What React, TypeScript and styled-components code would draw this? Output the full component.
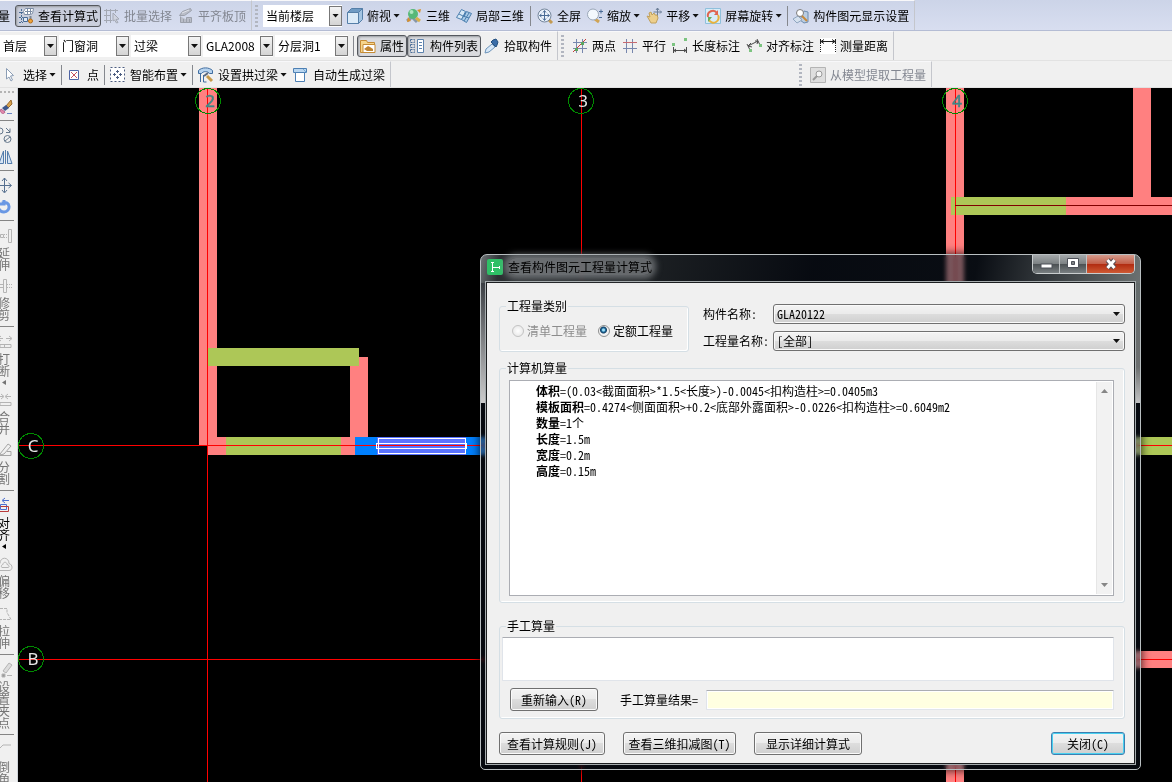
import React, { useState } from 'react';
import styled, { createGlobalStyle, css } from 'styled-components';

const GlobalStyle = createGlobalStyle`
  * { box-sizing: border-box; }
  body {
    margin: 0;
    background: #000;
    color: #000;
    font: 12px/16px "Noto Sans CJK SC", sans-serif;
  }
  button, select, input, textarea { font: inherit; color: inherit; }
`;

/* ---------- icons ---------- */

const Svg = styled.svg`
  display: block;
  flex: none;
  width: 16px;
  height: 16px;
  overflow: visible;
`;

const blue = '#4a6c96';
const grey = '#b4b4b4';

const icons: Record<string, React.ReactNode> = {
  formula: (
    <g fill="none" stroke={blue}>
      <path d="M3.500 1v13M1 4.500h4M1 9.500h4M1 14.500h4" strokeDasharray="2 1" />
      <path d="M5.500 3.500l2-3h8l-1 5-2 1h-6z" fill="#fff" stroke="#7d8da5" />
      <path d="M7 3.500h7M9.500 1v5M12.500 1v5" stroke="#7d8da5" />
      <path d="M5.500 9.500h4v4h-4z" fill="#dfe8f5" />
      <path d="M12.500 8v5" stroke="#7b8694" strokeWidth="2" />
      <circle cx="12.500" cy="13" r="2" fill="#f0a63c" stroke="#b56b17" />
    </g>
  ),
  batch: (
    <g fill="none" stroke="#a3a8b3">
      <path d="M0 2.500h14M0 7.500h7M0 12.500h8M2.500 1v14M6.500 1v14M11.500 1v4" />
      <path d="M9 5l6 6-3 .5 2 3-1.500.5-2-3L9 13z" fill="#cfd3de" />
    </g>
  ),
  slab: (
    <g fill="#b9bdc8" stroke="#9ba0ab">
      <path d="M1.500 7.500l3-4 8-3 1 2-7 5z" />
      <path d="M4 5l7-3" fill="none" stroke="#e0e3ea" />
      <path d="M2.500 8.500v6h11v-5h-5v2" />
      <path d="M5.500 11v3M8.500 11v3M11.500 11v3" />
    </g>
  ),
  cube: (
    <g stroke="#557fa8">
      <path d="M.5 4.500l4-4h11l-4 4z" fill="#6f9bc4" />
      <path d="M.5 4.500h11v11H.5z" fill="#dcebf8" />
      <path d="M11.500 4.500l4-4v11l-4 4z" fill="#a3c4e2" />
    </g>
  ),
  orbit: (
    <g>
      <path d="M1 13l5-4 5 5" stroke="#8596a8" strokeWidth="3" fill="none" />
      <circle cx="7" cy="6" r="5" fill="#57b878" />
      <circle cx="5.500" cy="4" r="2" fill="#aee6bf" />
      <path d="M11 2l4-1-1 4zM2 9l-1 5 4-1z" fill="#d9902a" />
      <path d="M10 10l4 3" stroke="#d9b04a" strokeWidth="3" />
    </g>
  ),
  partial: (
    <g fill="#d7e8f6" stroke="#4b7fae">
      <path d="M.5 9.500l5-8 4 2-4 8z" />
      <path d="M5.500 11.500l5-8 5 2-5 9z" fill="#a9cbe8" />
      <path d="M3 6l4 2 6 2M8 9l2-5M8 13l5-8" fill="none" />
    </g>
  ),
  fullscreen: (
    <g fill="none" stroke={blue}>
      <path d="M12 12l3 3" stroke="#c39a52" strokeWidth="3" />
      <circle cx="7.500" cy="7.500" r="6.500" fill="#e9f1fb" stroke="#75869b" />
      <path d="M7.500 3v9M3 7.500h9M6 4.500l1.500-2L9 4.500M6 10.500l1.500 2 1.500-2M4.500 6l-2 1.500 2 1.500M10.500 6l2 1.500-2 1.500" />
    </g>
  ),
  zoom: (
    <g fill="none">
      <path d="M8 11l4 3" stroke="#d0a454" strokeWidth="3" />
      <circle cx="6" cy="6.500" r="5.500" fill="#f3f8fd" stroke="#9aa7b8" />
      <path d="M12 3.500h4M14 1.500v4M12 9.500h3" stroke={blue} />
    </g>
  ),
  hand: (
    <g>
      <path d="M11.500 0v8M7.500 4h8M10 2l1.500-2L13 2M14 2.500L15.500 4 14 5.500" stroke="#6c7f98" fill="none" />
      <path d="M1 8l3 1-1-4 2-1 1 3 2-2 1 2h2l1 3-2 5H5z" fill="#edcf8c" stroke="#c0a05c" />
    </g>
  ),
  rotateView: (
    <g fill="none">
      <path d="M.5.5h15v15H.5z" fill="#d7ecf8" stroke="#8fc0dc" />
      <path d="M3 9a5 5 0 0 1 9-4" stroke="#e06550" strokeWidth="2" />
      <path d="M13 7a5 5 0 0 1-9 5" stroke="#e8b23c" strokeWidth="2" />
      <path d="M13 2v5H9z" fill="#e06550" />
      <path d="M3 14v-5h4z" fill="#69ad58" />
    </g>
  ),
  display: (
    <g>
      <path d="M7 12l4-9 4 1v10l-4 1z" fill="#b9cde2" stroke="#6d8bad" />
      <path d="M0 11l5-3 4 4-5 3z" fill="#d5e1ee" stroke="#8fa5bf" />
      <circle cx="7" cy="5" r="3.500" fill="#fff" stroke="#7c7c7c" />
      <path d="M9 8l5 5" stroke="#c8893b" strokeWidth="2" />
    </g>
  ),
  props: (
    <g>
      <path d="M.5 2.500h6l1 2h7v10H.5z" fill="#f6d58c" stroke="#c58b34" />
      <path d="M3 6.500h12v8H3z" fill="#fff" stroke="#c58b34" />
      <path d="M4 11l4-3 2 1 3 2v2H7z" fill="#c18531" />
    </g>
  ),
  list: (
    <g fill="none">
      <path d="M.5 1.500h4v3h-4zM.5 6.500h4v3h-4zM.5 11.500h4v3h-4z" stroke={blue} strokeDasharray="2 1" />
      <path d="M7.500 1.500h6v13h-6z" fill="#fff" stroke="#5d82ad" />
      <path d="M9 4.500h3M9 7.500h3M9 10.500h3" stroke="#5d82ad" />
    </g>
  ),
  picker: (
    <g>
      <path d="M8 6l3 3-6 5-4 1 1-4z" fill="#d7e8f8" stroke="#6d94ba" />
      <path d="M7 4l5 5 1-2 1-3-2-3-3 1z" fill="#3a6da8" stroke="#24507f" />
    </g>
  ),
  twoPoint: (
    <g fill="none">
      <path d="M4.500 1v14M10.500 1v14M1 4.500h14M1 10.500h14" stroke="#7787ad" />
      <path d="M1 14L14 1" stroke="#c63d3d" />
      <path d="M3 10h3v3H3zM9 4h3v3H9z" fill="#5aa75f" />
    </g>
  ),
  parallel: (
    <g fill="none">
      <path d="M4.500 1v14M10.500 1v14" stroke="#7787ad" />
      <path d="M1 10.500h14" stroke="#7787ad" />
      <path d="M1 4.500h14" stroke="#c66a70" />
    </g>
  ),
  lengthDim: (
    <g fill="none" stroke="#4b4b4b">
      <path d="M1.500 9v6M14.500 9v6M2 12.500h12M4 11l-2 1.500L4 14M12 11l2 1.500-2 1.500" />
      <path d="M0 5h3v3H0zM12 0h3v3h-3z" fill="#7cc480" stroke="none" />
    </g>
  ),
  alignDim: (
    <g fill="none" stroke="#4b4b4b">
      <path d="M1 6l3 6M11 1l3 6M2 8l10-5M5 5L2 8l4 1M9 3h3l-1 3" />
      <path d="M3 11h3v3H3zM13 6h3v3h-3z" fill="#7cc480" stroke="none" />
    </g>
  ),
  measure: (
    <g fill="none" stroke="#222">
      <path d="M0 0h16v16H0z" fill="#fff" stroke="none" />
      <path d="M.5 1v5M15.500 1v5M1 3.500h14M4 1.500l-3 2 3 2M12 1.500l3 2-3 2" />
      <path d="M.5 7v8M15.500 7v8" strokeDasharray="1 1" />
    </g>
  ),
  cursor: <path d="M3.500 1.500l7 7-3 .5 2 4-1.500 1-2-4-2.500 2z" fill="#fff" stroke="#8b9db5" />,
  point: (
    <g fill="none">
      <path d="M2.500 3.500h9v9h-9z" fill="#fff" stroke="#4e64a5" />
      <path d="M4 5l6 6M10 5l-6 6" stroke="#c55260" />
    </g>
  ),
  smart: (
    <g fill="none" stroke="#4c5d80">
      <path d="M.5.5h14v14H.5z" fill="#fff" strokeDasharray="2 2" />
      <path d="M7.500 3v3M7.500 9v3M3 7.500h3M9 7.500h3M6 4.500h3M6 10.500h3M4.500 6v3M10.500 6v3" />
    </g>
  ),
  arch: (
    <g fill="none">
      <path d="M.5 6.500v-3C4 0 11 0 14.500 3.500v3h-3C10 4 5 4 3.500 6.500z" fill="#b6d3ef" stroke="#3e6ca0" />
      <path d="M2.500 7v8M5.500 8v7h3" stroke="#3e6ca0" />
      <path d="M9 9l5 5" stroke="#c79a4a" strokeWidth="3" />
      <path d="M6 9l4-3" stroke="#5a6980" strokeWidth="2" />
    </g>
  ),
  lintel: (
    <g fill="#fff" stroke="#4d80b4">
      <path d="M.5 1.500h13v4H.5z" fill="#b9d6f0" />
      <path d="M2.500 5.500h9v9h-9z" />
      <path d="M10 2l4 4" stroke="#74a8d4" />
    </g>
  ),
  extract: (
    <g fill="none" stroke={grey}>
      <path d="M.5.5h15v15H.5z" fill="#dedede" />
      <circle cx="9" cy="7" r="3" fill="#f5f5f5" stroke="#999" />
      <path d="M7 9l-4 4" stroke="#999" strokeWidth="2" />
    </g>
  ),
  brush: (
    <g>
      <path d="M10 7l5-6 1 4-4 4z" fill="#d9a24c" stroke="#97672b" />
      <path d="M6 9l4-3 3 3-4 3z" fill="#3c568b" />
      <path d="M5 10l4 3c-1 3-6 1-4-3z" fill="#e58bb0" stroke="#b8648a" />
      <path d="M11 14.500h5" stroke="#6a86c4" />
    </g>
  ),
  copy: (
    <g fill="none" stroke="#66788c">
      <path d="M10 1l4 4M14 1.500v4h-4" />
      <circle cx="4" cy="4" r="3" />
      <circle cx="11.500" cy="12" r="3.500" />
      <path d="M9 14l5-4" />
    </g>
  ),
  mirror: (
    <g fill="#d7e5f5" stroke="#547dac">
      <path d="M7.500 2v12.500H3zM11.500 2v12.500h4.500z" />
      <path d="M9.500 1v14" />
    </g>
  ),
  move: (
    <path d="M8.500 1v14M2 8.500h13M6 4l2.500-3L11 4M6 13l2.500 3 2.500-3M12.500 6l3 2.500-3 2.500" fill="none" stroke="#567090" />
  ),
  rotate: <path d="M4 5h4v-4M6 4c9-3 9 9 2 9-3 0-4-1-5-3" fill="none" stroke="#6a98e4" strokeWidth="3" />,
  extend: (
    <g fill="none" stroke={grey}>
      <path d="M12.500 1.500h3v13h-3z" />
      <path d="M4.500 6.500h3v3h-3z" />
      <path d="M8 6.500h4M8 9.500h4" strokeDasharray="1 1" />
    </g>
  ),
  trim: (
    <g fill="none" stroke={grey}>
      <path d="M7.500 1.500h3v13h-3zM2 6.500h5M2 9.500h5" />
      <path d="M11 6.500h5M11 9.500h5" strokeDasharray="1 1" />
    </g>
  ),
  breakIcon: (
    <path d="M4 10.500h11v3H4zM8.500 10v3M2 4.500h5M10 4.500h5M13 2l3 2.500-3 2.500M5 2L2 4.500 5 7" fill="none" stroke={grey} />
  ),
  merge: (
    <path d="M4 10.500h11v3H4zM2 4.500h5M10 4.500h5M12 2l-3 2.500 3 2.500M5 2l3 2.500L5 7" fill="none" stroke={grey} />
  ),
  split: <path d="M3 13.500h12v-4h-4M4 12l8-10 3 2-7 8-4 1z" fill="none" stroke="#a5a5a5" />,
  align: (
    <g fill="none">
      <path d="M7 2.500h6M9 0L6 2.500 9 5" stroke="#4a6ed0" />
      <path d="M4.500 6.500h6v5h-6z" stroke="#4a6ed0" />
      <path d="M4 13.500h8.500v-5h-8" stroke="#b83a3a" />
    </g>
  ),
  offset: (
    <g fill="none" stroke={grey}>
      <path d="M4 14.500h9c4 0 4-6 0-7 0-7-9-7-9 0-3 2-2 6 0 7z" />
      <path d="M6 11.500h6c2 0 1-3-1-3 0-3-4-3-4 0-2 0-2 3-1 3z" />
    </g>
  ),
  stretch: (
    <path d="M4 2.500h7v4l4 7H4" fill="none" stroke={grey} strokeDasharray="3 1" />
  ),
  grip: (
    <g fill="#dcdcdc" stroke={grey}>
      <path d="M7 9l6-8 3 2-6 8z" />
      <path d="M6 12h3v3H6z" fill="#999" />
      <path d="M11 13.500h5" />
    </g>
  ),
  chamfer: <path d="M3 7l4-4h8" fill="none" stroke={grey} />,
};

const Icon = ({ name }: { name: string }) => (
  <Svg viewBox="0 0 16 16" aria-hidden="true">{icons[name]}</Svg>
);

/* ---------- toolbars ---------- */

const Page = styled.div`
  position: relative;
  display: flex;
  flex-direction: column;
  min-height: 100vh;
  overflow: hidden;
`;

const ToolRow = styled.div<{ $tinted?: boolean; $height: number }>`
  display: flex;
  height: ${p => p.$height}px;
  background: ${p => (p.$tinted ? 'linear-gradient(#ccd4e8, #d8def0)' : '#f0f0f0')};
  border-bottom: 1px solid ${p => (p.$tinted ? '#b4bcd4' : '#e2e2e2')};
`;

const ToolPanel = styled.div<{ $push?: number }>`
  display: flex;
  align-items: center;
  flex: none;
  padding-right: 2px;
  margin-left: ${p => p.$push ?? 0}px;
  border-right: 1px solid #c4c6cc;
  border-top: 1px solid #f8f8fa;
`;

const ToolButton = styled.button<{ $pressed?: boolean }>`
  display: flex;
  align-items: center;
  flex: none;
  height: 22px;
  padding: 0 3px;
  border: 0;
  background: none;
  white-space: nowrap;
  &:disabled { color: #838791; }
  ${p => p.$pressed && css`
    padding: 0 2px;
    border: 1px solid #55585e;
    border-radius: 3px;
    background: rgba(190, 194, 202, 0.45);
    box-shadow: inset 1px 1px 2px #9a9ca0;
  `}
`;

const ToolText = styled.span`
  margin: 0 2px 0 4px;
  &:last-child { margin-right: 0; }
`;

const Arrow = styled.span`
  width: 7px;
  height: 4px;
  background: #111;
  clip-path: polygon(0 0, 100% 0, 50% 100%);
`;

const Divider = styled.span<{ $tight?: boolean }>`
  flex: none;
  width: 1px;
  height: 20px;
  margin: 0 ${p => (p.$tight ? 2 : 3)}px;
  background: #85888e;
`;

const Handle = styled.span`
  flex: none;
  width: 3px;
  height: 22px;
  margin: 0 5px 0 3px;
  background: repeating-linear-gradient(#b2b6c0 0 2px, transparent 2px 4px);
`;

const ComboBox = styled.label<{ $width: number }>`
  display: grid;
  flex: none;
  width: ${p => p.$width}px;
  height: 22px;
  margin-right: 2px;
  background: #fff;
  & > * { grid-area: 1 / 1; }
`;

const ComboSelect = styled.select`
  appearance: none;
  min-width: 0;
  width: 100%;
  padding: 0 14px 0 3px;
  border: 0;
  background: none;
`;

const ComboArrow = styled.span`
  display: grid;
  place-items: center;
  justify-self: end;
  width: 13px;
  height: 20px;
  align-self: center;
  border: 1px solid #777;
  background: linear-gradient(#f4f4f4, #d4d4d4);
  pointer-events: none;
`;

const Clipped = styled.span`
  flex: none;
  width: 12px;
  margin: 0 5px 0 -2px;
`;

function Combo({ value, width, label }: { value: string; width: number; label: string }) {
  return (
    <ComboBox $width={width}>
      <ComboSelect aria-label={label}><option>{value}</option></ComboSelect>
      <ComboArrow><Arrow /></ComboArrow>
    </ComboBox>
  );
}

type ToolProps = { icon: string; text: string; menu?: boolean; pressed?: boolean; disabled?: boolean };

const Tool = ({ icon, text, menu, pressed, disabled }: ToolProps) => (
  <ToolButton type="button" $pressed={pressed} aria-pressed={pressed} disabled={disabled}>
    <Icon name={icon} />
    <ToolText>{text}</ToolText>
    {menu && <Arrow />}
  </ToolButton>
);

/* ---------- side bar ---------- */

const Workspace = styled.div`
  display: flex;
  flex: 1;
  min-height: 694px;
`;

const SideBar = styled.nav`
  display: flex;
  flex-direction: column;
  align-items: flex-start;
  flex: none;
  width: 18px;
  height: 694px;
  min-height: 100%;
  overflow: hidden;
  background: #f0f0f0;
  border-right: 1px solid #cfd4da;
`;

const SideHandle = styled.span`
  flex: none;
  width: 16px;
  height: 2px;
  margin: 3px 0 6px;
  background: repeating-linear-gradient(90deg, #b4b4b4 0 2px, transparent 2px 4px);
`;

const SideTool = styled.button<{ $labelled: boolean }>`
  display: flex;
  flex-direction: column;
  align-items: center;
  flex: none;
  gap: 3px;
  width: 16px;
  margin-left: -4px;
  padding: ${p => (p.$labelled ? 1 : 0)}px 0 0;
  border: 0;
  background: none;
  &:disabled { color: #747474; }
  & + & { margin-top: 6px; }
`;

const SideLabel = styled.span`
  width: 12px;
  line-height: 12px;
  word-break: break-all;
`;

const SideArrow = styled.span`
  width: 4px;
  height: 5px;
  background: currentColor;
  clip-path: polygon(100% 0, 100% 100%, 0 50%);
`;

const SideDivider = styled.hr`
  flex: none;
  width: 14px;
  height: 1px;
  margin: 5px 0 6px;
  border: 0;
  background: #858585;
`;

type SideEntry = { icon: string; text?: string; label: string; menu?: boolean; active?: boolean };

const sideGroups: SideEntry[][] = [
  [{ icon: 'brush', label: '删除' }],
  [{ icon: 'copy', label: '复制' }, { icon: 'mirror', label: '镜像' }],
  [{ icon: 'move', label: '移动' }, { icon: 'rotate', label: '旋转' }],
  [{ icon: 'extend', text: '延伸', label: '延伸' }, { icon: 'trim', text: '修剪', label: '修剪' }],
  [
    { icon: 'breakIcon', text: '打断', label: '打断', menu: true },
    { icon: 'merge', text: '合并', label: '合并' },
    { icon: 'split', text: '分割', label: '分割' },
  ],
  [
    { icon: 'align', text: '对齐', label: '对齐', menu: true, active: true },
    { icon: 'offset', text: '偏移', label: '偏移' },
    { icon: 'stretch', text: '拉伸', label: '拉伸' },
  ],
  [{ icon: 'grip', text: '设置夹点', label: '设置夹点' }],
  [{ icon: 'chamfer', text: '倒角', label: '倒角' }],
];

/* ---------- drawing ---------- */

const Plan = styled.svg`
  display: block;
  flex: 1;
  min-width: 0;
  align-self: stretch;
  background: #000;
  font: 17px "Noto Sans", sans-serif;
`;

const wall = '#ff8080';
const beam = '#adc757';

type AxisProps = { x: number; y: number; name: string; teal?: boolean };

const AxisMark = ({ x, y, name, teal }: AxisProps) => (
  <g>
    <circle cx={x} cy={y} r="12.500" fill="none" stroke="#008a00" />
    <text x={x + 2} y={y + 6} textAnchor="middle" fill={teal ? '#3f8686' : '#e4e4e4'} stroke={teal ? '#3f8686' : 'none'} strokeWidth="0.500">{name}</text>
  </g>
);

const FloorPlan = () => (
  <Plan role="img" aria-label="平面图" shapeRendering="crispEdges">
    <g fill={wall}>
      <rect x="181" y="0" width="18" height="358" />
      <rect x="190" y="349" width="147" height="18" />
      <rect x="332" y="269" width="18" height="80" />
      <rect x="928" y="0" width="18" height="100%" />
      <rect x="1115" y="0" width="18" height="110" />
      <rect x="1047" y="109" width="100%" height="18" />
      <rect x="1090" y="563" width="100%" height="17" />
    </g>
    <g fill={beam}>
      <rect x="190" y="260" width="151" height="18" />
      <rect x="208" y="349" width="115" height="18" />
      <rect x="933" y="109" width="115" height="18" />
      <rect x="1090" y="349" width="100%" height="18" />
    </g>
    <rect x="337" y="349" width="160" height="18" fill="#0080ff" />
    <rect x="359" y="349" width="89" height="18" fill="#5a73ff" />
    <g stroke="#f00">
      <line x1="189.500" y1="0" x2="189.500" y2="100%" />
      <line x1="563.500" y1="0" x2="563.500" y2="100%" />
      <line x1="937.500" y1="0" x2="937.500" y2="100%" />
      <line x1="0" y1="357.500" x2="100%" y2="357.500" />
      <line x1="0" y1="571.500" x2="100%" y2="571.500" />
    </g>
    <line x1="937" y1="117.500" x2="100%" y2="117.500" stroke="#800000" />
    <g fill="none" stroke="#fff">
      <rect x="360.500" y="350.500" width="87" height="15" />
      <rect x="358.500" y="355.500" width="90" height="5" />
    </g>
    <AxisMark x={190} y={13} name="2" teal />
    <AxisMark x={563} y={13} name="3" />
    <AxisMark x={937} y={13} name="4" teal />
    <AxisMark x={13} y={358} name="C" />
    <AxisMark x={13} y={571} name="B" />
  </Plan>
);

/* ---------- dialog ---------- */

const Dialog = styled.section`
  position: absolute;
  top: 254px;
  left: 480px;
  right: 31px;
  padding: 0 5px 5px;
  border: 1px solid #b9bfc1;
  border-radius: 7px 7px 5px 5px;
  background:
    linear-gradient(rgba(110, 114, 118, 0.5), rgba(225, 225, 225, 0.9)) left 28px / 5px 120px no-repeat,
    linear-gradient(rgba(110, 118, 118, 0.9), rgba(120, 122, 122, 0.9) 70%, rgba(215, 215, 215, 0.9)) right 28px / 5px 120px no-repeat,
    linear-gradient(100deg, rgba(120, 126, 128, 0.9) 0, rgba(60, 64, 66, 0.7) 20px, rgba(38, 42, 44, 0.7) 160px, rgba(8, 12, 20, 0.2) 330px, rgba(20, 26, 32, 0.2) 490px, rgba(80, 86, 88, 0.7) 570px, rgba(112, 118, 118, 0.95) 100%) top / 100% 28px no-repeat,
    rgba(20, 30, 46, 0.35);
  backdrop-filter: blur(2px) saturate(0.6);
  box-shadow: 0 0 8px 1px rgba(0, 0, 0, 0.7);
  font-family: "Noto Sans Mono CJK SC", "Noto Sans CJK SC", monospace;
`;

const TitleBar = styled.header`
  display: flex;
  align-items: flex-start;
  height: 27px;
  padding-left: 1px;
`;

const Title = styled.h1`
  flex: 1;
  margin: 4px 0 0 5px;
  font: 12px/16px "Noto Sans CJK SC", sans-serif;
  & > span {
    border-radius: 8px;
    background: rgba(150, 154, 156, 0.6);
    box-shadow: 0 0 6px 4px rgba(150, 154, 156, 0.6);
  }
`;

const AppIcon = styled(Svg)`
  margin-top: 4px;
`;

const WindowButtons = styled.div`
  display: flex;
  overflow: hidden;
  border: 1px solid #c9cdce;
  border-top: 0;
  border-radius: 0 0 5px 5px;
`;

const WindowButton = styled.button<{ $close?: boolean }>`
  display: grid;
  place-items: center;
  width: ${p => (p.$close ? 47 : 27)}px;
  height: 18px;
  padding: 0;
  border: 0;
  border-right: ${p => (p.$close ? 0 : 1)}px solid #c0c4c6;
  background: ${p => (p.$close
    ? 'linear-gradient(#d49a8c, #c4604a 48%, #b02a10 50%, #cf5a34)'
    : 'linear-gradient(#a4a8aa, #7d8284 48%, #4a4f52 50%, #7a8082)')};
`;

const DialogBody = styled.form`
  padding: 17px 9px 8px 12px;
  border: 1px solid #1c1e20;
  outline: 1px solid #a6acae;
  background: #f0f0f0;
`;

const TopRow = styled.div`
  display: flex;
  align-items: flex-start;
  gap: 14px;
`;

const Group = styled.fieldset<{ $pad: string; $width?: number }>`
  min-width: 0;
  width: ${p => (p.$width ? `${p.$width}px` : 'auto')};
  flex: none;
  margin: 0;
  padding: ${p => p.$pad};
  border: 1px solid #d5dfe5;
  border-radius: 3px;
  box-shadow: inset -1px -1px #fff;
  & > legend {
    height: 12px;
    padding: 0 1px;
    line-height: 12px;
  }
`;

const GroupStack = styled.div<{ $top: number }>`
  margin-top: ${p => p.$top}px;
`;

const Legend = styled.legend<{ $indent: number }>`
  margin-left: ${p => p.$indent}px;
`;

const RadioRow = styled.div`
  display: flex;
  gap: 11px;
`;

const RadioLabel = styled.label<{ $off?: boolean }>`
  display: flex;
  align-items: center;
  gap: 3px;
  color: ${p => (p.$off ? '#8c8c8c' : '#000')};
`;

const Radio = styled.input`
  appearance: none;
  width: 12px;
  height: 12px;
  margin: 0;
  border: 1px solid #8e8f8f;
  border-radius: 50%;
  background: radial-gradient(#fff, #e2e2e2);
  &:checked {
    background: radial-gradient(circle at 45% 40%, #9fdcf5 0 1px, #1f6fa0 2px, #143e63 3px, #f2f2f2 4px);
  }
  &:disabled { border-color: #c3c3c3; }
`;

const Fields = styled.div`
  display: grid;
  flex: 1;
  grid-template-columns: 70px minmax(0, 1fr);
  row-gap: 7px;
  align-items: center;
  padding-top: 4px;
`;

const FieldPicker = styled.div`
  display: grid;
  & > * { grid-area: 1 / 1; }
  & > span { align-self: center; justify-self: end; margin-right: 5px; pointer-events: none; }
`;

const raised = 'linear-gradient(#f3f3f3, #ebebeb 48%, #dddddd 50%, #cfcfcf)';

const FieldSelect = styled.select`
  appearance: none;
  width: 100%;
  height: 20px;
  padding: 0 16px 0 3px;
  border: 1px solid #707070;
  border-radius: 3px;
  background: ${raised};
  box-shadow: inset 0 0 0 1px #fafafa;
`;

const Report = styled.div`
  display: flex;
  height: 216px;
  border: 1px solid #abadb3;
  background: #fff;
`;

const ReportLines = styled.dl`
  flex: 1;
  margin: 0;
  padding: 2px 0 0 26px;
  & > div { display: flex; white-space: nowrap; }
  dt { font-weight: 700; }
  dd { margin: 0; }
`;

const ScrollTrack = styled.div`
  display: flex;
  flex-direction: column;
  justify-content: space-between;
  align-items: center;
  width: 16px;
  margin: 1px;
  padding: 7px 0;
  border-left: 1px solid #e6e6e6;
  background: #f2f2f2;
`;

const ScrollArrow = styled(Arrow)<{ $up?: boolean }>`
  background: #868686;
  clip-path: ${p => (p.$up ? 'polygon(50% 0, 100% 100%, 0 100%)' : 'polygon(0 0, 100% 0, 50% 100%)')};
`;

const inset = css`
  border: 1px solid #e0e4ea;
  border-top-color: #abadb3;
  border-radius: 1px;
`;

const ManualInput = styled.textarea`
  display: block;
  width: 100%;
  height: 44px;
  resize: none;
  background: #fff;
  ${inset}
`;

const ManualRow = styled.div`
  display: flex;
  align-items: center;
  margin: 7px 0 0 8px;
`;

const ResultLabel = styled.label`
  margin: 0 8px 0 22px;
`;

const ResultInput = styled.input`
  flex: 1;
  min-width: 0;
  height: 20px;
  padding: 0 3px;
  background: #ffffe1;
  box-shadow: inset 0 0 0 1px #fff;
  ${inset}
`;

const PushButton = styled.button<{ $width: number; $primary?: boolean }>`
  flex: none;
  width: ${p => p.$width}px;
  height: 23px;
  padding: 0;
  border: 1px solid ${p => (p.$primary ? '#3c7fb1' : '#707070')};
  border-radius: 3px;
  background: ${raised};
  box-shadow: inset 0 0 0 1px ${p => (p.$primary ? '#48d0f0' : '#fafafa')};
  line-height: 16px;
  white-space: nowrap;
`;

const Footer = styled.footer`
  display: flex;
  gap: 18px;
  margin-top: 13px;
  & > :last-child { margin-left: auto; }
`;

const results: [string, string][] = [
  ['体积', '=(0.03<截面面积>*1.5<长度>)-0.0045<扣构造柱>=0.0405m3'],
  ['模板面积', '=0.4274<侧面面积>+0.2<底部外露面积>-0.0226<扣构造柱>=0.6049m2'],
  ['数量', '=1个'],
  ['长度', '=1.5m'],
  ['宽度', '=0.2m'],
  ['高度', '=0.15m'],
];

function FormulaDialog() {
  const [manual, setManual] = useState('');
  return (
    <Dialog role="dialog" aria-labelledby="dialog-title">
      <TitleBar>
        <AppIcon viewBox="0 0 16 16" aria-hidden="true">
          <rect width="16" height="16" rx="2" fill="#2fbf66" />
          <path d="M5.500 3v10M4 3.500h3M4 12.500h3M6 8.500h7M12.500 7v3" fill="none" stroke="#fff" />
        </AppIcon>
        <Title id="dialog-title"><span>查看构件图元工程量计算式</span></Title>
        <WindowButtons>
          <WindowButton type="button" aria-label="最小化">
            <Svg viewBox="0 0 16 16"><rect x="3" y="8" width="11" height="4" fill="#fff" stroke="#4d5058" /></Svg>
          </WindowButton>
          <WindowButton type="button" aria-label="最大化">
            <Svg viewBox="0 0 16 16">
              <path d="M2.500 2.500h11v9h-11zM6.500 5.500h3v3h-3z" fill="#fff" fillRule="evenodd" stroke="#4d5058" />
            </Svg>
          </WindowButton>
          <WindowButton type="button" aria-label="关闭窗口" $close>
            <Svg viewBox="0 0 16 16">
              <path d="M4.500 4l7 8M11.500 4l-7 8" stroke="#5a4a50" strokeWidth="5" />
              <path d="M4.500 4l7 8M11.500 4l-7 8" stroke="#fff" strokeWidth="3" />
            </Svg>
          </WindowButton>
        </WindowButtons>
      </TitleBar>
      <DialogBody onSubmit={e => e.preventDefault()}>
        <TopRow>
          <Group $pad="11px 11px 12px 12px" $width={190}>
            <Legend $indent={-6}>工程量类别</Legend>
            <RadioRow>
              <RadioLabel $off><Radio type="radio" name="kind" disabled />清单工程量</RadioLabel>
              <RadioLabel><Radio type="radio" name="kind" defaultChecked />定额工程量</RadioLabel>
            </RadioRow>
          </Group>
          <Fields>
            <label htmlFor="part">构件名称:</label>
            <FieldPicker>
              <FieldSelect id="part"><option>GLA20122</option></FieldSelect>
              <Arrow />
            </FieldPicker>
            <label htmlFor="quantity">工程量名称:</label>
            <FieldPicker>
              <FieldSelect id="quantity"><option>[全部]</option></FieldSelect>
              <Arrow />
            </FieldPicker>
          </Fields>
        </TopRow>
        <GroupStack $top={10}>
          <Group $pad="6px 10px 6px 9px">
            <Legend $indent={-3}>计算机算量</Legend>
            <Report>
              <ReportLines>
                {results.map(([name, value]) => (
                  <div key={name}><dt>{name}</dt><dd>{value}</dd></div>
                ))}
              </ReportLines>
              <ScrollTrack><ScrollArrow $up /><ScrollArrow /></ScrollTrack>
            </Report>
          </Group>
        </GroupStack>
        <GroupStack $top={17}>
          <Group $pad="5px 10px 7px 2px">
            <Legend $indent={4}>手工算量</Legend>
            <ManualInput aria-label="手工算量" value={manual} onChange={e => setManual(e.target.value)} />
            <ManualRow>
              <PushButton type="button" $width={88} onClick={() => setManual('')}>重新输入(R)</PushButton>
              <ResultLabel htmlFor="result">手工算量结果=</ResultLabel>
              <ResultInput id="result" readOnly />
            </ManualRow>
          </Group>
        </GroupStack>
        <Footer>
          <PushButton type="button" $width={106}>查看计算规则(J)</PushButton>
          <PushButton type="button" $width={113}>查看三维扣减图(T)</PushButton>
          <PushButton type="button" $width={108}>显示详细计算式</PushButton>
          <PushButton type="submit" $width={74} $primary>关闭(C)</PushButton>
        </Footer>
      </DialogBody>
    </Dialog>
  );
}

/* ---------- page ---------- */

export default function App() {
  return (
    <Page>
      <GlobalStyle />
      <ToolRow $tinted $height={31}>
        <ToolPanel>
          <Clipped>量</Clipped>
          <Tool icon="formula" text="查看计算式" pressed />
          <Tool icon="batch" text="批量选择" disabled />
          <Tool icon="slab" text="平齐板顶" disabled />
        </ToolPanel>
        <ToolPanel>
          <Handle />
          <Combo label="楼层范围" value="当前楼层" width={79} />
          <Tool icon="cube" text="俯视" menu />
          <Tool icon="orbit" text="三维" />
          <Tool icon="partial" text="局部三维" />
          <Divider />
          <Tool icon="fullscreen" text="全屏" />
          <Tool icon="zoom" text="缩放" menu />
          <Tool icon="hand" text="平移" menu />
          <Tool icon="rotateView" text="屏幕旋转" menu />
          <Divider $tight />
          <Tool icon="display" text="构件图元显示设置" />
        </ToolPanel>
      </ToolRow>
      <ToolRow $height={30}>
        <ToolPanel>
          <Combo label="楼层" value="首层" width={57} />
          <Combo label="构件类别" value="门窗洞" width={70} />
          <Combo label="构件类型" value="过梁" width={70} />
          <Combo label="构件" value="GLA2008" width={70} />
          <Combo label="分层" value="分层洞1" width={73} />
          <Divider />
          <Tool icon="props" text="属性" pressed />
          <Tool icon="list" text="构件列表" pressed />
          <Tool icon="picker" text="拾取构件" />
        </ToolPanel>
        <ToolPanel>
          <Handle />
          <Tool icon="twoPoint" text="两点" />
          <Tool icon="parallel" text="平行" />
          <Tool icon="lengthDim" text="长度标注" />
          <Tool icon="alignDim" text="对齐标注" />
          <Tool icon="measure" text="测量距离" />
        </ToolPanel>
      </ToolRow>
      <ToolRow $height={27}>
        <ToolPanel>
          <Tool icon="cursor" text="选择" menu />
          <Divider $tight />
          <Tool icon="point" text="点" />
          <Divider $tight />
          <Tool icon="smart" text="智能布置" menu />
          <Divider $tight />
          <Tool icon="arch" text="设置拱过梁" menu />
          <Tool icon="lintel" text="自动生成过梁" />
        </ToolPanel>
        <ToolPanel $push={405}>
          <Handle />
          <Tool icon="extract" text="从模型提取工程量" disabled />
        </ToolPanel>
      </ToolRow>
      <Workspace>
        <SideBar aria-label="编辑工具">
          <SideHandle />
          {sideGroups.map((group, index) => (
            <React.Fragment key={group[0].icon}>
              {index > 0 && <SideDivider />}
              {group.map(item => (
                <SideTool
                  key={item.icon}
                  type="button"
                  aria-label={item.label}
                  $labelled={!!item.text}
                  disabled={!!item.text && !item.active}
                >
                  <Icon name={item.icon} />
                  {item.text && <SideLabel>{item.text}</SideLabel>}
                  {item.menu && <SideArrow />}
                </SideTool>
              ))}
            </React.Fragment>
          ))}
        </SideBar>
        <FloorPlan />
      </Workspace>
      <FormulaDialog />
    </Page>
  );
}
